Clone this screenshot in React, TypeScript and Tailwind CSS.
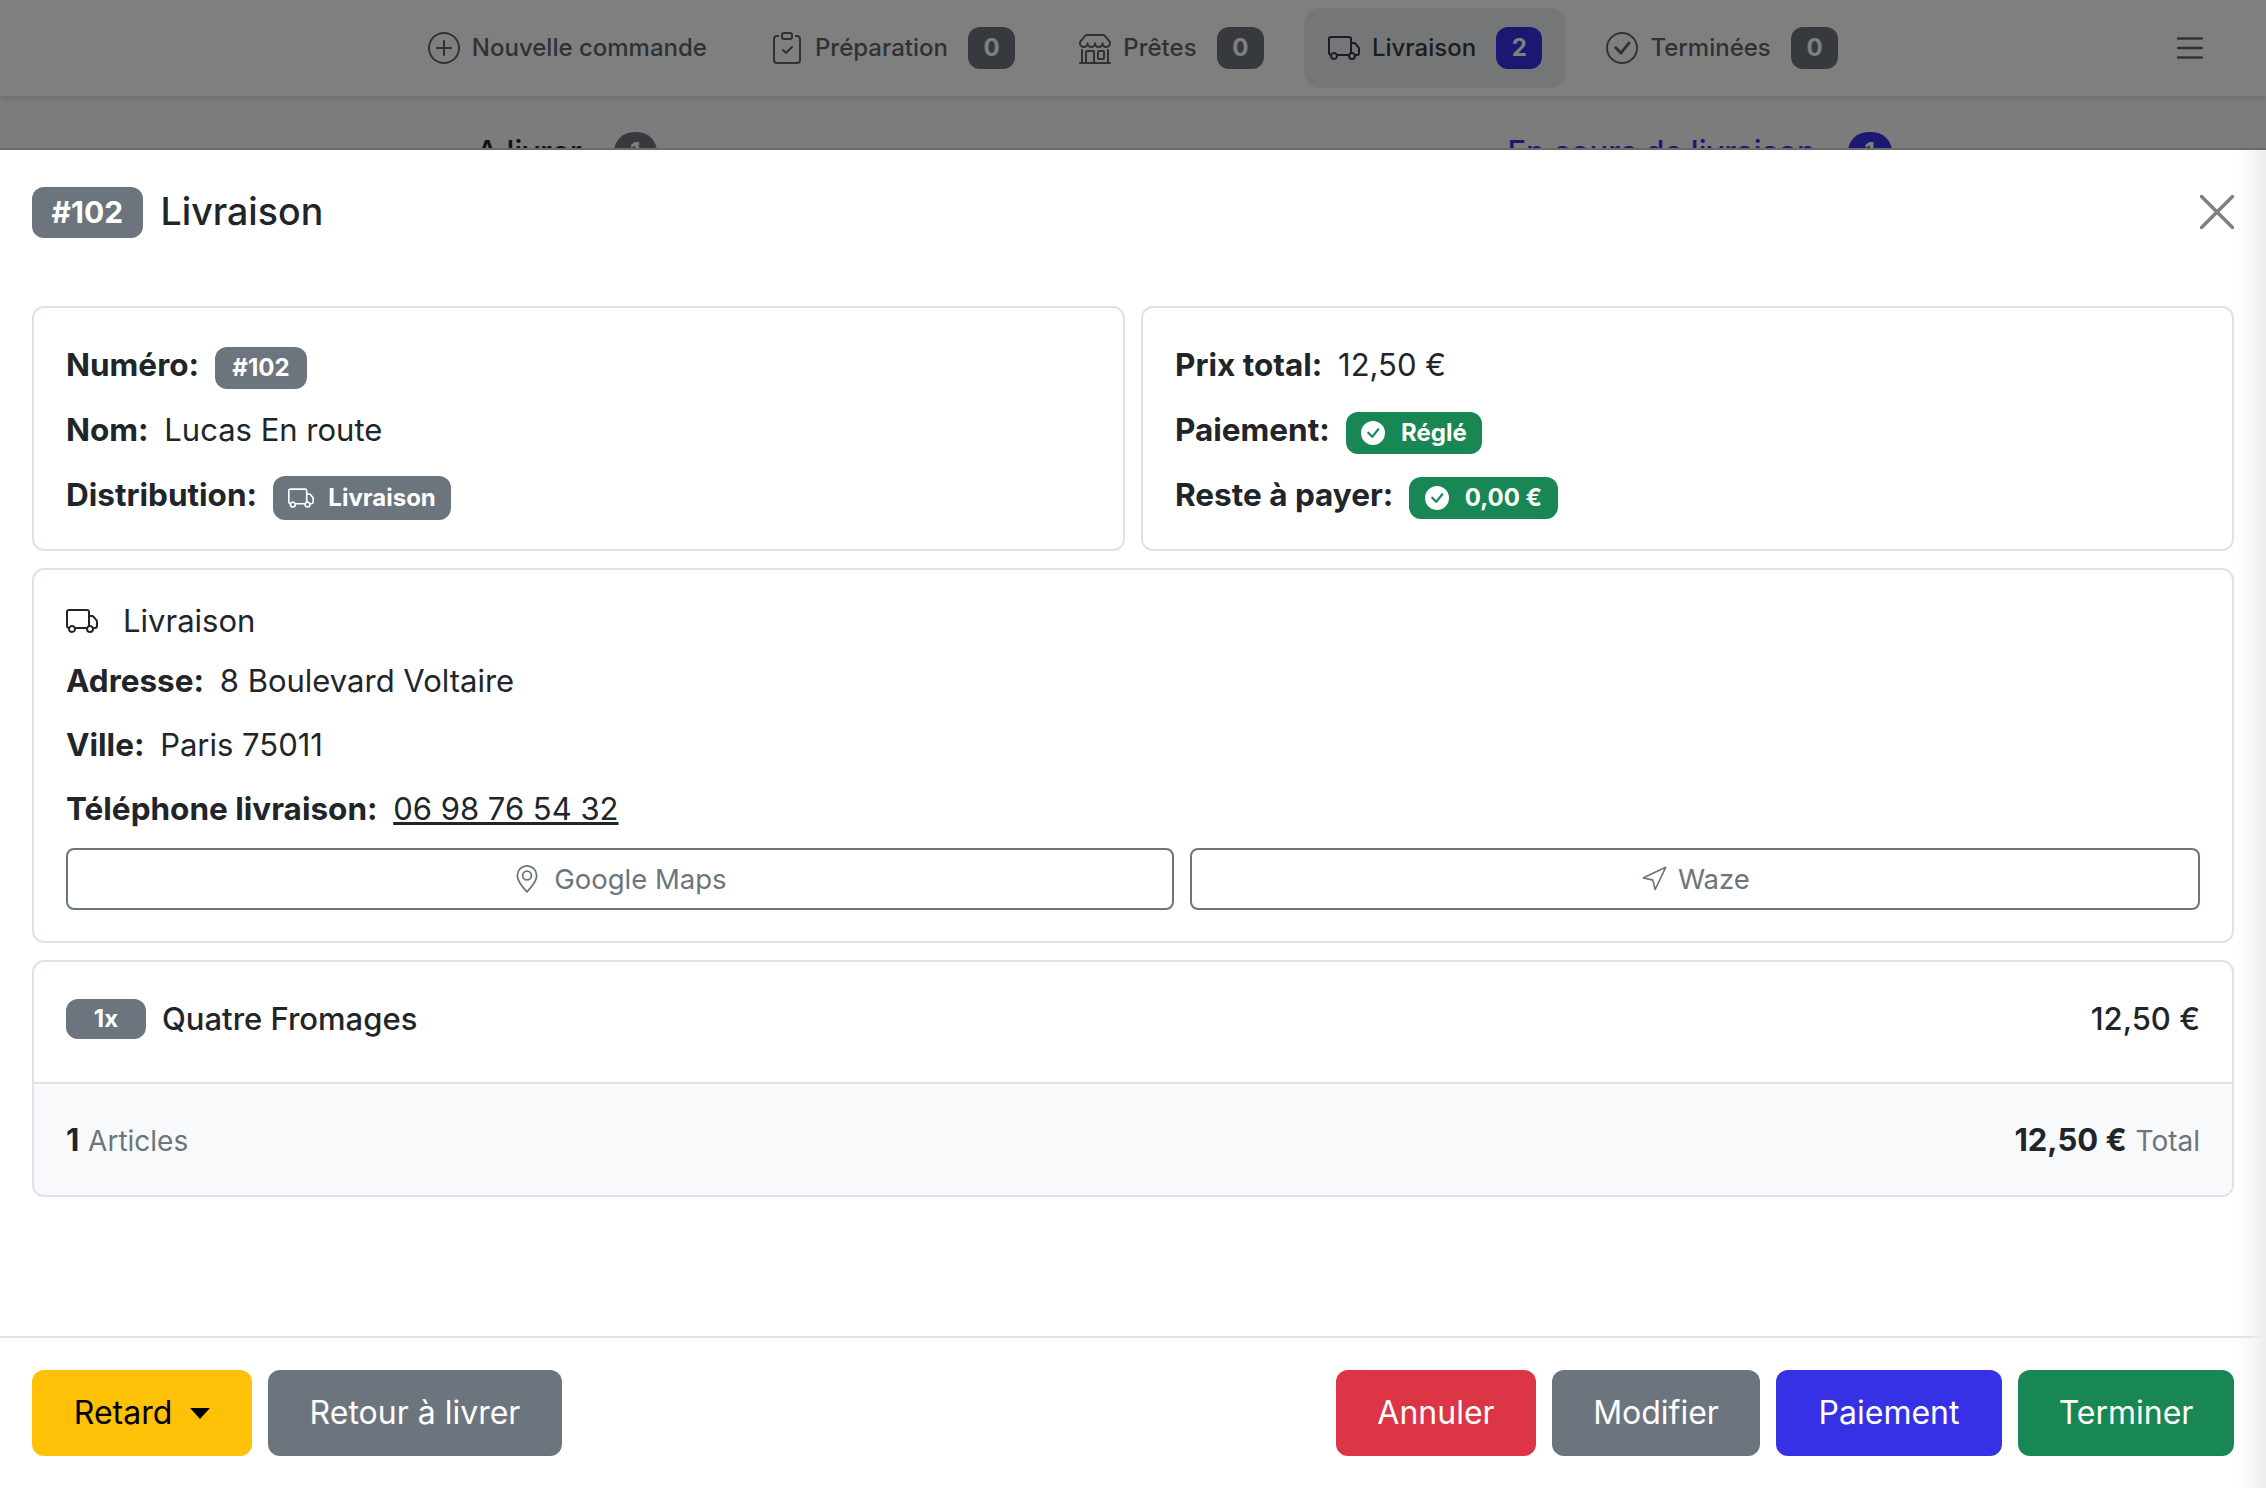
import React from 'react';
import { Navigation } from 'lucide-react';
import {
  BsCheckCircle,
  BsCheckCircleFill,
  BsClipboardCheck,
  BsGeoAlt,
  BsList,
  BsPlusCircle,
  BsShop,
  BsTruck,
} from 'react-icons/bs';

const Badge = ({ className = 'bg-[#6c757d]', children }: { className?: string; children: React.ReactNode }) => (
  <span className={`inline-block rounded-[12px] px-[15.6px] py-[8.8px] text-[24px] leading-none font-bold text-white whitespace-nowrap ${className}`}>
    {children}
  </span>
);

const navItems = [
  { label: 'Nouvelle commande', icon: BsPlusCircle },
  { label: 'Préparation', icon: BsClipboardCheck, count: 0 },
  { label: 'Prêtes', icon: BsShop, count: 0 },
  { label: 'Livraison', icon: BsTruck, count: 2, active: true },
  { label: 'Terminées', icon: BsCheckCircle, count: 0 },
];

const TopBar = () => (
  <div className="flex h-[96px] shrink-0 items-center bg-white shadow-[0_2px_6px_rgba(0,0,0,0.15)]">
    <div className="flex-1" />
    <div className="flex items-center gap-4">
      {navItems.map(({ label, icon: Icon, count, active }) => (
        <div
          key={label}
          className={`flex h-[80px] items-center rounded-[16px] px-6 text-[24px] font-medium ${active ? 'bg-[#e9ecef] text-[#343a40]' : 'text-[#5f656b]'}`}
        >
          <Icon className="mr-3 h-[32px] w-[32px]" />
          <span>{label}</span>
          {count !== undefined && (
            <Badge className={`ml-[20px] ${active ? 'bg-[#3631e5]' : 'bg-[#6c757d]'}`}>{count}</Badge>
          )}
        </div>
      ))}
    </div>
    <div className="flex flex-1 justify-end">
      <BsList className="mr-[57px] h-[38px] w-[38px] text-[#5f656b]" />
    </div>
  </div>
);

const Label = ({ children }: { children: React.ReactNode }) => (
  <strong className="mr-[7px] text-[31.5px] font-bold">{children}</strong>
);

const Field = ({ label, children, last }: { label: string; children: React.ReactNode; last?: boolean }) => (
  <p className={last ? '' : 'mb-[17px]'}>
    <Label>{label}</Label> {children}
  </p>
);

const Card = ({ className = '', children }: { className?: string; children: React.ReactNode }) => (
  <div className={`rounded-[12px] border-2 border-[#dee2e6] bg-white ${className}`}>{children}</div>
);

const ModalButton = ({ className, children }: { className: string; children: React.ReactNode }) => (
  <button className={`flex h-[86px] items-center justify-center rounded-[12px] text-[32px] ${className}`}>{children}</button>
);

export default function App() {
  return (
    <div className="relative flex h-[1488px] w-[2266px] flex-col overflow-hidden bg-[#f8f9fa] font-[family-name:Inter,sans-serif] text-[31px] leading-[48px] text-[#212529]">
      <TopBar />
      <div className="grid grid-cols-2 pt-[36px] leading-[40px] font-medium">
        <div className="flex items-center justify-center gap-8">
          <span>A livrer</span>
          <span className="h-[40px] w-[43px] rounded-full bg-[#6c757d] text-center text-[24px] font-bold text-white">1</span>
        </div>
        <div className="flex items-center justify-center gap-8 text-[#3631e5]">
          <span>En cours de livraison</span>
          <span className="h-[40px] w-[44px] rounded-full bg-[#3631e5] text-center text-[24px] font-bold text-white">1</span>
        </div>
      </div>

      {/* backdrop */}
      <div className="absolute inset-0 bg-black/50" />

      {/* modal */}
      <div className="absolute inset-x-0 top-[148px] bottom-0 flex flex-col border-t-2 border-[#6a6a6a] bg-white">
        <div className="flex h-[124px] shrink-0 items-center justify-between px-8">
          <div className="flex items-center gap-[18px]">
            <span className="rounded-[12px] bg-[#6c757d] px-[19.5px] py-[10.5px] text-[30px] leading-none font-bold text-white">#102</span>
            <span className="text-[37.5px] leading-[60px] font-medium">Livraison</span>
          </div>
          <svg className="h-[34px] w-[34px]" viewBox="0 0 34 34" stroke="#808080" strokeWidth="3.5" strokeLinecap="round">
            <line x1="1.5" y1="1.5" x2="32.5" y2="32.5" />
            <line x1="32.5" y1="1.5" x2="1.5" y2="32.5" />
          </svg>
        </div>

        <div className="flex flex-1 flex-col gap-[17px] px-8 pt-8">
          <div className="grid grid-cols-2 gap-4">
            <Card className="h-[245px] px-8 pt-[33px]">
              <Field label="Numéro:">
                <Badge className="bg-[#6c757d] !px-[17.6px]">#102</Badge>
              </Field>
              <Field label="Nom:">Lucas En route</Field>
              <Field label="Distribution:" last>
                <Badge>
                  <BsTruck className="mr-[14px] inline-block h-[26px] w-[26px] align-[-5px]" />
                  Livraison
                </Badge>
              </Field>
            </Card>
            <Card className="h-[245px] px-8 pt-[33px]">
              <Field label="Prix total:">12,50 €</Field>
              <Field label="Paiement:">
                <Badge className="bg-[#198754]">
                  <BsCheckCircleFill className="mr-4 inline-block h-[24px] w-[24px] align-[-4px]" />
                  Réglé
                </Badge>
              </Field>
              <Field label="Reste à payer:" last>
                <Badge className="bg-[#198754]">
                  <BsCheckCircleFill className="mr-4 inline-block h-[24px] w-[24px] align-[-4px]" />
                  0,00 €
                </Badge>
              </Field>
            </Card>
          </div>

          <Card className="h-[375px] px-8 pt-8">
            <div className="mb-[17px] flex h-[38px] items-center gap-[25px] leading-[38px]">
              <BsTruck className="h-[32px] w-[32px]" />
              <span>Livraison</span>
            </div>
            <p className="mb-4">
              <Label>Adresse:</Label> 8 Boulevard Voltaire
            </p>
            <p className="mb-4">
              <Label>Ville:</Label> Paris 75011
            </p>
            <p className="mb-[15px]">
              <Label>Téléphone livraison:</Label> <a className="underline">06 98 76 54 32</a>
            </p>
            <div className="flex gap-4">
              <button className="flex h-[62px] flex-auto items-center justify-center gap-[13px] rounded-[8px] border-2 border-[#6c757d] text-[27.5px] text-[#6c757d]">
                <BsGeoAlt className="h-[28px] w-[28px]" />
                Google Maps
              </button>
              <button className="flex h-[62px] flex-auto items-center justify-center gap-[10px] rounded-[8px] border-2 border-[#6c757d] px-[3px] text-[27.5px] text-[#6c757d]">
                <Navigation className="h-[28px] w-[28px]" strokeWidth={1.4} />
                Waze
              </button>
            </div>
          </Card>

          <Card className="overflow-hidden">
            <div className="flex h-[122px] items-center justify-between border-b-2 border-[#dee2e6] px-8 pb-[6px] font-medium">
              <div className="flex items-center gap-4">
                <span className="inline-block w-[80px] rounded-[12px] bg-[#6c757d] py-[8.4px] text-center text-[24px] leading-none font-bold text-white">1x</span>
                <span>Quatre Fromages</span>
              </div>
              <span>12,50 €</span>
            </div>
            <div className="flex h-[111px] items-center justify-between bg-[#f8f9fa] px-8 pt-[2px]">
              <div>
                <strong className="font-bold">1</strong> <span className="text-[28px] text-[#6c757d]">Articles</span>
              </div>
              <div>
                <strong className="font-bold">12,50 €</strong> <span className="text-[28px] text-[#6c757d]">Total</span>
              </div>
            </div>
          </Card>
        </div>

        <div className="flex shrink-0 justify-between border-t-2 border-[#dee2e6] p-8">
          <div className="flex gap-4">
            <ModalButton className="w-[220px] bg-[#ffc107] text-black">
              Retard
              <span className="ml-[18px] h-0 w-0 border-x-[10px] border-t-[11px] border-x-transparent border-t-black" />
            </ModalButton>
            <ModalButton className="w-[294px] bg-[#6c757d] text-white">Retour à livrer</ModalButton>
          </div>
          <div className="flex gap-4">
            <ModalButton className="w-[200px] bg-[#dc3545] text-white">Annuler</ModalButton>
            <ModalButton className="w-[208px] bg-[#6c757d] text-white">Modifier</ModalButton>
            <ModalButton className="w-[226px] bg-[#3631e5] text-white">Paiement</ModalButton>
            <ModalButton className="w-[216px] bg-[#198754] text-white">Terminer</ModalButton>
          </div>
        </div>

        {/* edge shade */}
        <div className="pointer-events-none absolute top-0 right-0 bottom-0 w-[29px] bg-linear-to-r from-white/0 to-[#eeeeee]" />
      </div>
    </div>
  );
}
